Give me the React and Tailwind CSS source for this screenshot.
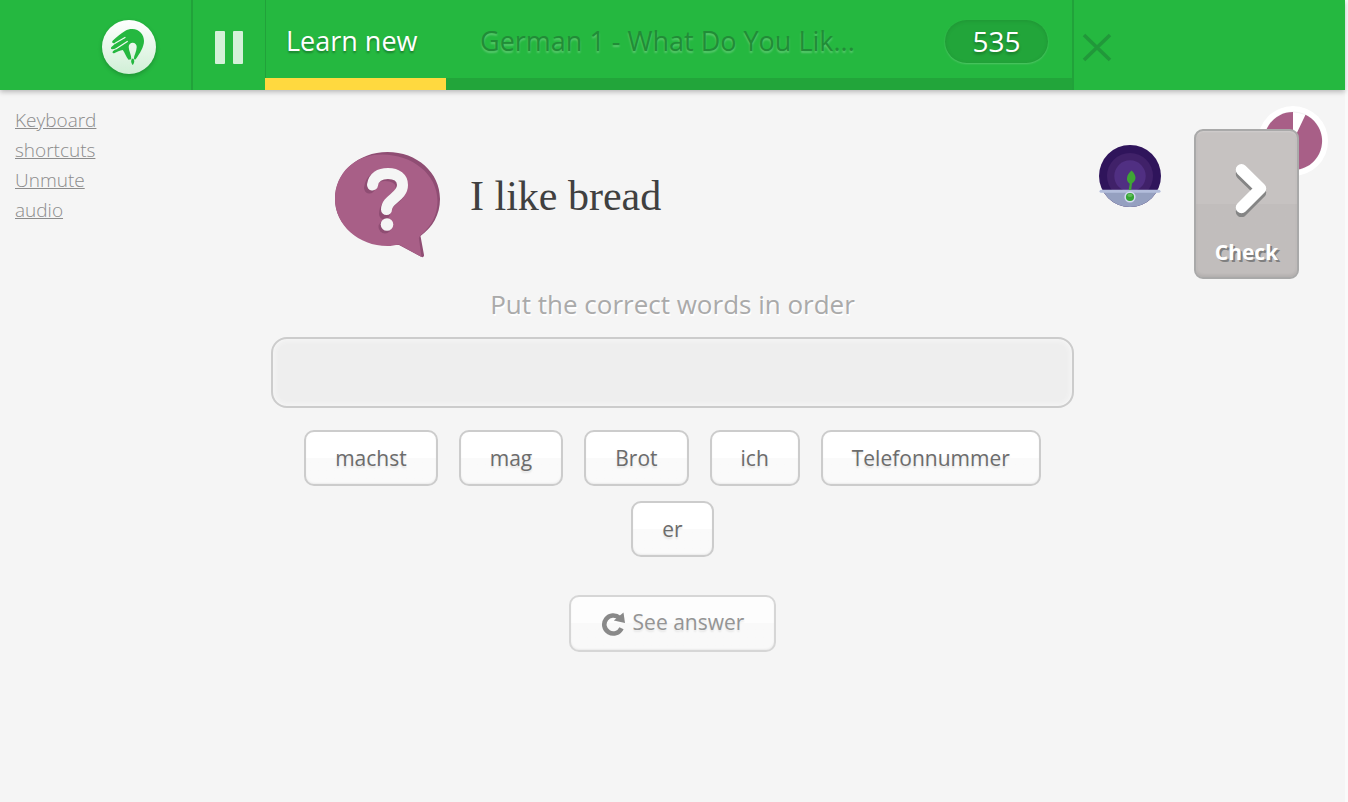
import React from "react";

const words = ["machst", "mag", "Brot", "ich", "Telefonnummer", "er"];

function Logo() {
  return (
    <svg viewBox="0 0 54 54" className="size-[54px] drop-shadow-[0_2px_2px_rgba(0,0,0,0.2)]" aria-hidden="true">
      <defs>
        <linearGradient id="disc" x1="0" y1="0" x2="0" y2="1">
          <stop offset="0" stopColor="#ffffff" />
          <stop offset="1" stopColor="#d0efd6" />
        </linearGradient>
      </defs>
      <circle cx="27" cy="27" r="27" fill="url(#disc)" />
      <path
        fill="#25b840"
        d="M10.900 20.400C15 17 19 13.500 23 11c2.500-1.500 5-2.100 7.300-2 7.200.2 11.700 6 11.700 12 0 5.500-4 12.500-8.500 18.500l-1.700-.3C31.800 35.500 34.700 31.500 34.700 27c0-2.500-1.700-4.300-4-4.300s-4 1.800-4 4.300c0 4 2.900 8 2.600 12.300l-2.800.5C24 36.500 22.500 32 20.800 30c-2.800.4-6 2.200-8.600 3.200-1.800.5-2.200-1.200-1-2.200l3.300-2.600-4.200.8c-1.700.1-1.800-1.500-.6-2.500l4.300-3.700-2.300.2c-1.700 0-2-1.900-.8-2.800z"
      />
      <path d="M13.500 23 23 17.500M13.800 29 25.300 21.500" stroke="#f2fbf4" strokeWidth="1.200" fill="none" strokeLinecap="round" />
      <path fill="#25b840" d="M30.700 38.500c1.200.4 1.500 1.500 1.500 2.800 0 1.600-.6 2.800-1.500 3.600-.9-.8-1.500-2-1.500-3.600 0-1.300.3-2.400 1.500-2.800z" />
    </svg>
  );
}

function Bubble() {
  return (
    <svg viewBox="0 0 105 106" className="h-[106px] w-[105px] shrink-0" aria-hidden="true">
      <path fill="#8f4d73" d="M52.500 0C82 0 105 20.500 105 47c0 15.500-7.500 28.500-19.500 37L89 103c.2 2-1.200 2.600-2.800 1.800L64 93C23.500 94 0 73 0 47S23 0 52.500 0z" />
      <path fill="#a85f87" d="M47 2.500C77 2.500 102.500 22 102.500 49c0 14-6 25-16.500 34-1.800 1.500-2.300 2.500-2 4L86.500 105 64 92.500c-4 .9-7.600 1.500-11.500 1.500C23.500 94 0 73 0 47S20 2.500 47 2.500z" />
      <path d="M34.500 36c1-8.500 7-12.500 15.500-12.500 10 0 16 5 16 12 0 12-16.500 13-16.500 26.500" fill="none" stroke="#8f4d73" strokeWidth="11" strokeLinecap="round" strokeLinejoin="round" />
      <circle cx="50" cy="75" r="6.500" fill="#8f4d73" />
      <path d="M37.500 33C38.500 25 44.500 21.500 53 21.500c9 0 14.500 4.500 14.500 11.500 0 12-16 14-16 24.500" fill="none" stroke="#f5f5f5" strokeWidth="11" strokeLinecap="round" strokeLinejoin="round" />
      <circle cx="52" cy="72.500" r="6.300" fill="#f5f5f5" />
    </svg>
  );
}

function Plant() {
  return (
    <svg viewBox="0 0 62 62" className="size-[62px]" aria-hidden="true">
      <defs>
        <clipPath id="dome"><circle cx="31" cy="31" r="31" /></clipPath>
      </defs>
      <g clipPath="url(#dome)">
        <rect width="62" height="62" fill="#2f145b" />
        <circle cx="31" cy="31" r="23" fill="#402169" />
        <circle cx="31" cy="31" r="15.700" fill="#502f82" />
        <path fill="#95a0c0" d="M0 46h62v16H0z" />
      </g>
      <path fill="#f5f5f5" d="M0 47h2.500l3 3.500H0zM62 47h-2.500l-3 3.500H62z" />
      <rect x="0.500" y="44.700" width="61" height="3" rx="1.500" fill="#b3bddb" />
      <path fill="#3fa535" d="M32.500 25.500c2.700 2.500 4 5 4 7.300 0 2.500-1.500 4.300-3.500 5.700l-.8 6.500h-2.500l1-6.300c-2-1.400-2.900-3.200-2.700-5.500.2-2.800 2-5.700 4.500-7.700z" />
      <circle cx="31" cy="52" r="5.600" fill="#d5dcf2" />
      <circle cx="31" cy="52" r="4.100" fill="#35a535" />
      <ellipse cx="31" cy="50.300" rx="2.600" ry="1.600" fill="#63bd5c" />
    </svg>
  );
}

function Timer() {
  return (
    <svg viewBox="0 0 70 70" className="absolute -top-[23px] -right-[29px] size-[70px]" aria-hidden="true">
      <circle cx="35" cy="35" r="35" fill="#fff" />
      <circle cx="35" cy="35" r="29" fill="#fff" stroke="#f3f3f3" />
      <path fill="#a85f87" d="M35 35V6A29 29 0 1 0 47.500 8.800z" />
    </svg>
  );
}

export default function App() {
  return (
    <div className="min-h-screen bg-[#fafafa] pr-[3px] font-['Open_Sans',sans-serif]">
      <div className="min-h-screen bg-[#f5f5f5]">
        <header className="flex h-[90px] bg-[#25b840] shadow-[0_2px_5px_rgba(0,0,0,0.25)]">
          <div className="flex w-[193px] shrink-0 justify-end border-r-2 border-[#21a23a] pt-5 pr-[35px]">
            <a href="#home" aria-label="Home" className="h-[54px]"><Logo /></a>
          </div>
          <button aria-label="Pause" className="flex w-[72px] shrink-0 items-center justify-center gap-2 pt-[5px]">
            <span className="h-[33px] w-[10px] rounded-[1px] bg-[#d4f1d9]" />
            <span className="h-[33px] w-[10px] rounded-[1px] bg-[#d4f1d9]" />
          </button>
          <div className="flex w-3/5 shrink-0 flex-col border-l border-[#21a23a]">
            <div className="flex h-[78px] items-center justify-between pt-1 pr-6 pl-5">
              <h1 className="w-[194px] shrink-0 text-[27px] text-white [text-shadow:0_2px_2px_rgba(0,0,0,0.3)]">Learn new</h1>
              <h2 className="mr-auto truncate text-[27px] text-[#218c37] [text-shadow:0_2px_2px_rgba(255,255,255,0.25)]">German 1 - What Do You Lik...</h2>
              <span className="flex h-[43px] w-[103px] shrink-0 items-center justify-center rounded-full bg-[#22a53a] text-[28px] text-white shadow-[inset_0_1px_4px_rgba(0,0,0,0.1),0_1px_2px_rgba(255,255,255,0.2)] [text-shadow:0_2px_3px_rgba(0,0,0,0.3)]">535</span>
            </div>
            <div className="-ml-px h-3 bg-[#22a53a]">
              <div className="h-full w-[181px] bg-[#ffd93f]" />
            </div>
          </div>
          <div className="grow border-l-2 border-[#21a23a] pt-[33px] pl-2">
            <button aria-label="Close" className="block">
              <svg viewBox="0 0 30 29" className="h-[29px] w-[30px]" aria-hidden="true">
                <path d="M2 2 28 27M28 2 2 27" stroke="#21983a" strokeWidth="3.600" />
              </svg>
            </button>
          </div>
        </header>

        <div className="grid grid-cols-[271px_minmax(0,1fr)_271px]">
          <nav className="flex w-[115px] flex-col pt-[15px] pl-[15px] text-[19px] leading-[30px] font-light text-[#8c8c8c]">
            <a href="#shortcuts" className="underline">Keyboard shortcuts</a>
            <a href="#audio" className="underline">Unmute audio</a>
          </nav>

          <main className="flex flex-col items-center">
            <div className="flex w-full gap-[30px] pt-[62px] pl-16">
              <Bubble />
              <p className="mt-[14px] font-['Liberation_Serif',serif] text-[42px] leading-[60px] text-[#404040]">I like bread</p>
            </div>
            <h3 id="task" className="mt-[27px] text-[26px] leading-[38px] text-[#aaaaaa] [text-shadow:1px_2px_0_#fff]">Put the correct words in order</h3>
            <div role="group" aria-labelledby="task" className="mt-[14px] h-[71px] w-full rounded-2xl border-2 border-[#cccccc] bg-[#eeeeee] shadow-[inset_0_0_6px_#fafafa]" />
            <div className="mt-[22px] flex flex-wrap justify-center gap-x-[21px] gap-y-[15px]">
              {words.map((word) => (
                <button key={word} className="h-14 rounded-[10px] border-2 border-[#cccccc] bg-linear-to-b from-white from-50% to-[#fafafa] to-50% px-[29px] pt-[2px] text-[21px] text-[#6c6c6c] shadow-[inset_0_-1px_2px_rgba(0,0,0,0.06)] [text-shadow:0_2px_2px_rgba(0,0,0,0.1)]">
                  {word}
                </button>
              ))}
            </div>
            <button className="mt-[38px] flex h-[57px] items-center gap-2 rounded-[10px] border-2 border-[#d6d6d6] bg-linear-to-b from-[#fdfdfd] from-50% to-[#f9f9f9] to-50% px-[30px] text-[21px] text-[#949494] shadow-[inset_0_-1px_2px_rgba(0,0,0,0.06)] [text-shadow:0_2px_2px_rgba(0,0,0,0.08)]">
              <svg viewBox="0 0 24 24" className="size-6" aria-hidden="true">
                <path d="M18.500 6A9 9 0 1 0 20.500 16.200" fill="none" stroke="#898989" strokeWidth="4.600" />
                <path d="M22.500 0.500 24 11 12.800 8.500z" fill="#898989" />
              </svg>
              <span className="pb-[2px]">See answer</span>
            </button>
          </main>

          <aside className="flex items-start justify-between pt-[39px] pr-[46px] pl-[25px]">
            <div className="pt-4"><Plant /></div>
            <div className="relative">
              <Timer />
              <button className="relative flex h-[150px] w-[105px] flex-col items-center rounded-[9px] border-2 border-[#a9a9a9] bg-linear-to-b from-[#c6c2c1] from-50% to-[#c1bdbc] to-50% pt-8 text-[21px] font-bold text-white shadow-[inset_0_1px_2px_rgba(255,255,255,0.2),inset_0_-2px_3px_rgba(0,0,0,0.08)] [text-shadow:2px_2px_0_#808080]">
                <svg viewBox="-6 0 40 54" className="h-[54px] w-10" aria-hidden="true">
                  <path d="M8.500 11 27.500 29.500 8.500 48.500" fill="none" stroke="#858585" strokeWidth="11.500" strokeLinecap="round" strokeLinejoin="round" />
                  <path d="M8.500 6.800 27.500 25.500 8.500 44.500" fill="none" stroke="#fff" strokeWidth="11.500" strokeLinecap="round" strokeLinejoin="round" />
                </svg>
                <span className="mt-5 leading-[30px]">Check</span>
              </button>
            </div>
          </aside>
        </div>
      </div>
    </div>
  );
}
